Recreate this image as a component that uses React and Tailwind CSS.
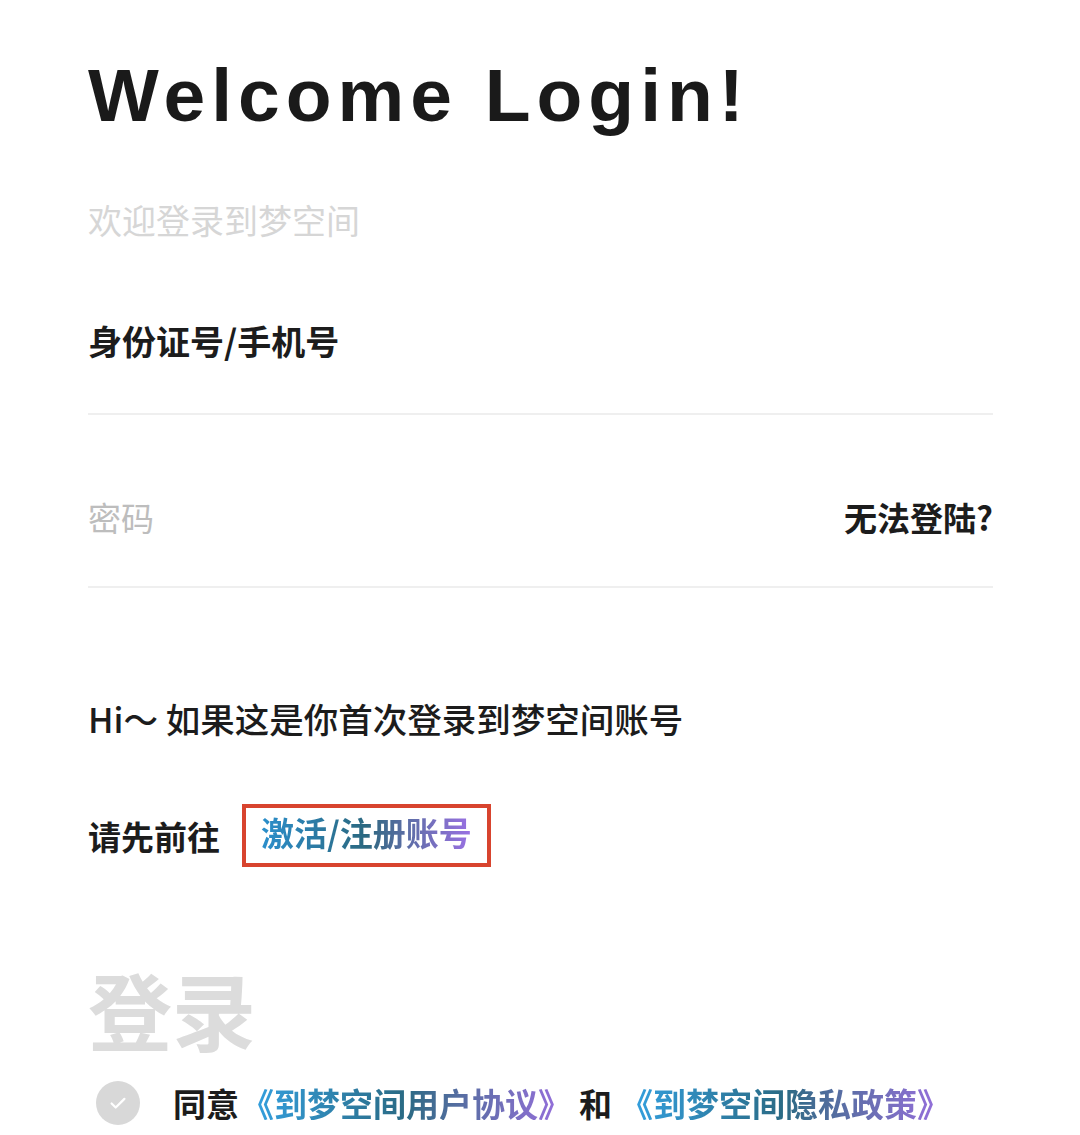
import React from "react";

const cjk = "font-['Noto_Sans_CJK_SC','Liberation_Sans',sans-serif]";

const GradientText = ({ children, className = "" }) => (
  <span
    className={`bg-linear-to-r from-[#34a4e6] via-[#2a6a84] to-[#9b6ee2] bg-clip-text text-transparent ${className}`}>
    {children}
  </span>
);

const CheckCircle = () => (
  <span className="flex h-[44px] w-[44px] shrink-0 items-center justify-center rounded-full bg-[#d8d8d8]">
    <svg viewBox="0 0 24 24" className="h-[22px] w-[22px]" fill="none" stroke="white" strokeWidth="2.4" strokeLinecap="round" strokeLinejoin="round">
      <path d="M5 12.5l4.5 4.5L19 7.5" />
    </svg>
  </span>
);

const App = () => {
  return (
    <div className={`min-h-[1135px] w-[1080px] bg-white pl-[88px] pr-[87px] ${cjk}`}>
      <h1 className="pt-[58px] font-['Liberation_Sans',sans-serif] text-[75px] leading-[75px] font-bold tracking-[6px] text-[#1a1a1a]">
        Welcome Login!
      </h1>

      <p className="mt-[70px] text-[34px] leading-[34px] text-[#d6d6d6]">欢迎登录到梦空间</p>

      <div className="mt-[87px] border-b-2 border-[#efefef] pb-[55px]">
        <p className="text-[34px] leading-[34px] font-semibold text-[#1c1c1c]">身份证号/手机号</p>
      </div>

      <div className="mt-[85px] flex items-center justify-between border-b-2 border-[#efefef] pb-[52px]">
        <span className="text-[33px] leading-[34px] text-[#bdbdbd]">密码</span>
        <span className="text-[33px] leading-[34px] font-semibold text-[#1c1c1c]">无法登陆?</span>
      </div>

      <p className="mt-[113px] text-[34.5px] leading-[34px] font-medium text-[#1c1c1c]">
        Hi～ 如果这是你首次登录到梦空间账号
      </p>

      <div className="mt-[69px] flex items-center">
        <span className="text-[33px] leading-[34px] font-semibold text-[#1c1c1c]">请先前往</span>
        <span className="ml-[22px] border-[4px] border-[#d8442e] px-[15px] pt-[7px] pb-[12px]">
          <span className="bg-linear-to-r from-[#2b8fcc] via-[#2b6880] to-[#9a70e4] bg-clip-text text-[33px] leading-[34px] font-semibold text-transparent">
            激活/注册账号
          </span>
        </span>
      </div>

      <p className="mt-[100px] text-[84px] leading-[84px] font-bold text-[#dcdcdc]">登录</p>

      <div className="mt-[30px] flex items-center">
        <span className="ml-[8px]">
          <CheckCircle />
        </span>
        <span className="ml-[33px] text-[33px] leading-[34px] font-bold text-[#1c1c1c]">同意</span>
        <GradientText className="ml-[2px] text-[33px] leading-[34px] font-bold">《到梦空间用户协议》</GradientText>
        <span className="ml-[8px] text-[33px] leading-[34px] font-bold text-[#1c1c1c]">和</span>
        <GradientText className="ml-[8px] text-[33px] leading-[34px] font-bold">《到梦空间隐私政策》</GradientText>
      </div>
    </div>
  );
};

export default App;
